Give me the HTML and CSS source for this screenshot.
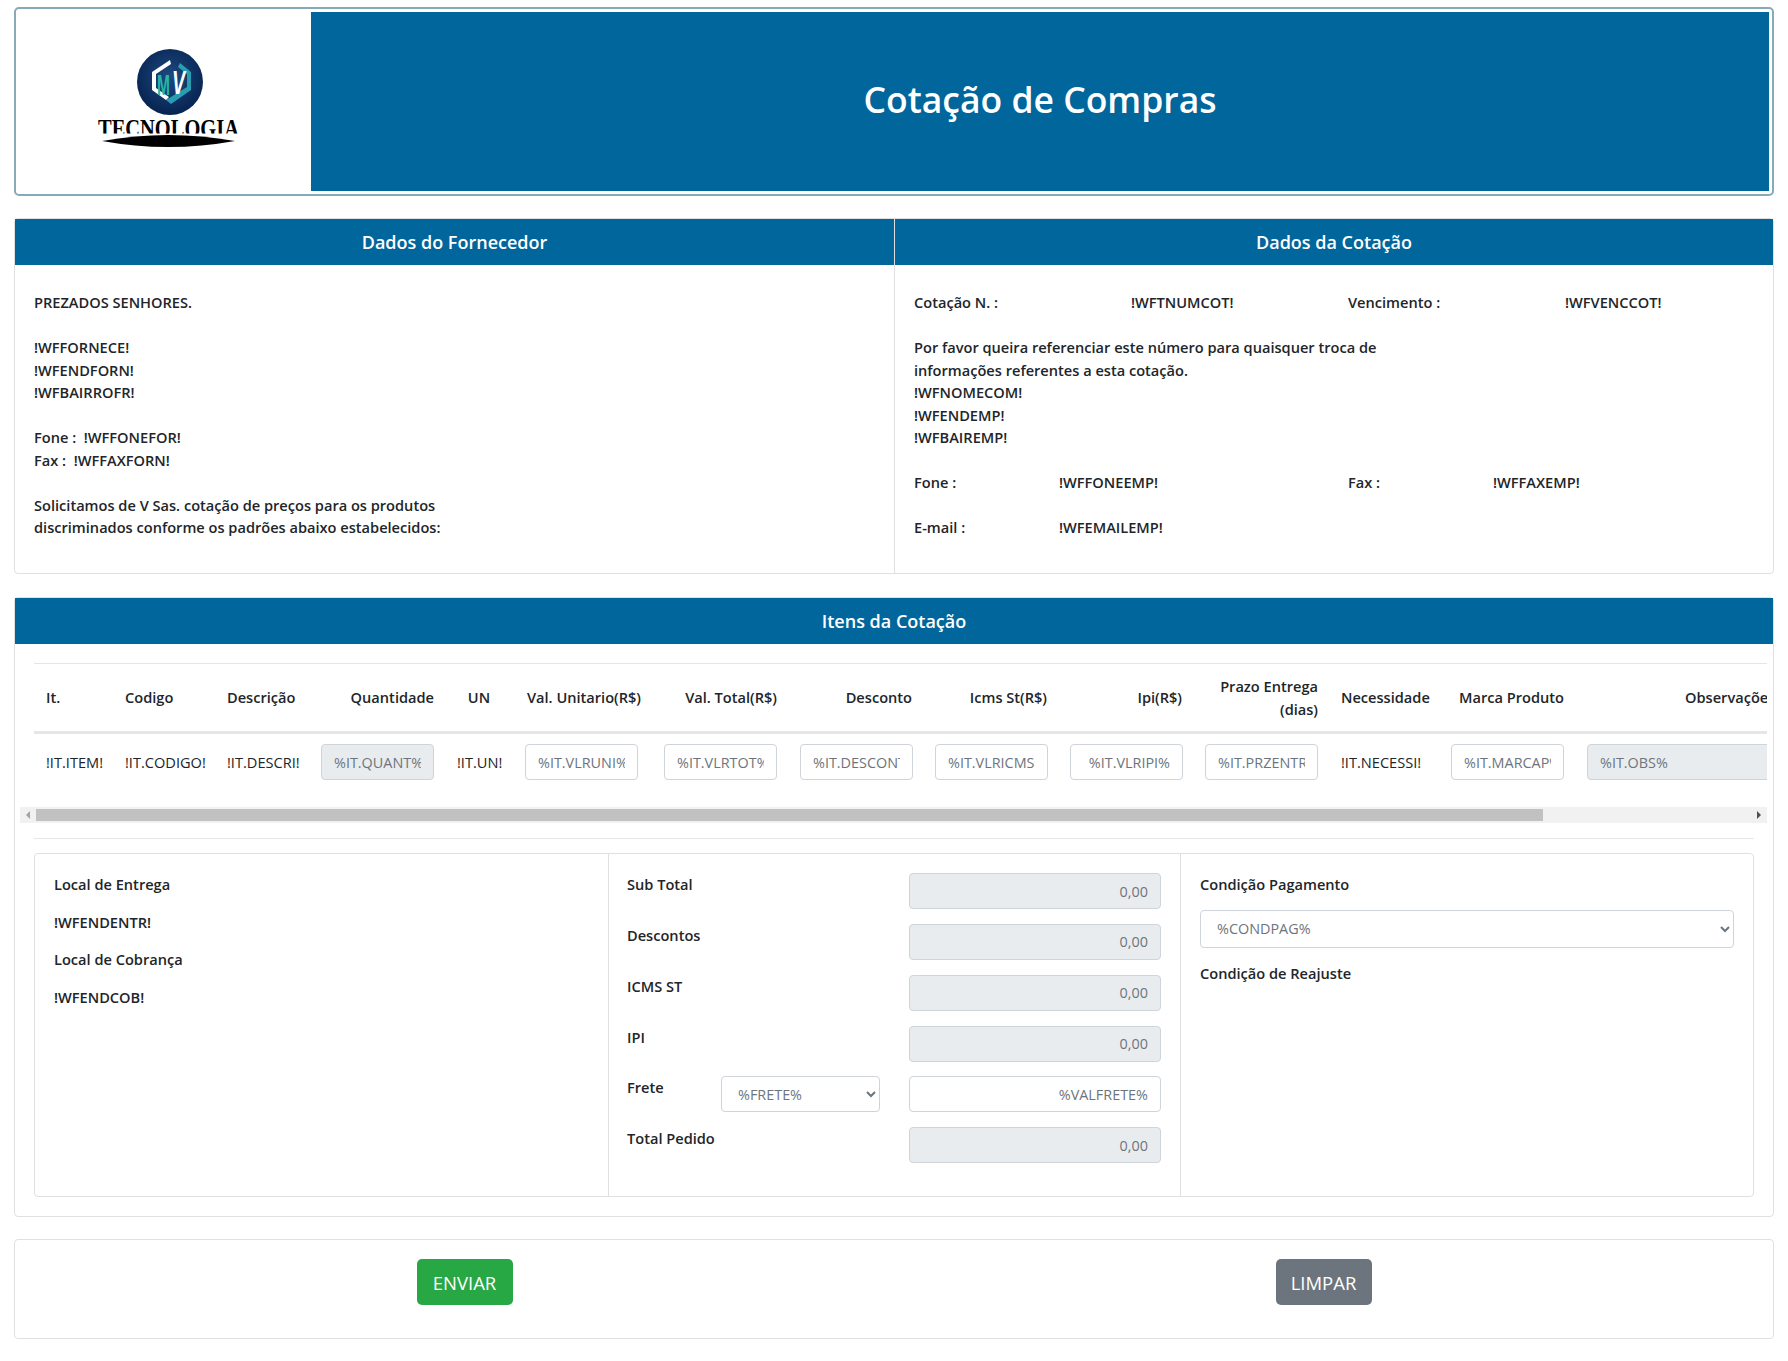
FILE: index.html
```html
<!DOCTYPE html>
<html lang="pt-BR">
<head>
  <meta charset="UTF-8" />
  <title>Cotação de Compras</title>
  <link rel="stylesheet" href="styles.css">
</head>
<body>
  <header class="top">
    <div class="logo">
      <svg width="160" height="110" viewBox="0 0 160 110">
        <defs>
          <radialGradient id="disc" cx="50%" cy="42%" r="60%">
            <stop offset="0" stop-color="#1d4a80" />
            <stop offset="1" stop-color="#06214f" />
          </radialGradient>
          <clipPath id="wordClip"><rect x="0" y="68" width="160" height="16.5" /></clipPath>
        </defs>
        <circle cx="80" cy="33" r="33" fill="url(#disc)" />
        <path d="M80 11 L62 23 V41 L76 51 L79 48 L66 39 V25 L81 15 Z" fill="#fff" />
        <path d="M90 14 L101 23 V41 L81 55 L76 51 L97 38 V25 L88 18 Z" fill="#2a9db0" />
        <text class="logo-m" x="67" y="46" textLength="13" lengthAdjust="spacingAndGlyphs">M</text>
        <text class="logo-v" x="82" y="45" textLength="13" lengthAdjust="spacingAndGlyphs">V</text>
        <g clip-path="url(#wordClip)">
          <text class="logo-word" x="8" y="87.5" textLength="141" lengthAdjust="spacingAndGlyphs">TECNOLOGIA</text>
        </g>
        <path d="M12 92 Q78 80 145 92 Q78 104 12 92 Z" fill="#000" />
      </svg>
    </div>
    <div class="banner"><h1>Cotação de Compras</h1></div>
  </header>

  <section class="card">
    <div class="two-heads">
      <h2 class="card-head">Dados do Fornecedor</h2>
      <h2 class="card-head head-split">Dados da Cotação</h2>
    </div>
    <div class="two-cols">
      <div class="col-body">
        <p>PREZADOS SENHORES.</p>
        <p>!WFFORNECE!<br>!WFENDFORN!<br>!WFBAIRROFR!</p>
        <p>Fone :&nbsp; !WFFONEFOR!<br>Fax :&nbsp; !WFFAXFORN!</p>
        <p>Solicitamos de V Sas. cotação de preços para os produtos<br>discriminados conforme os padrões abaixo estabelecidos:</p>
      </div>
      <div class="col-body col-split">
        <p class="quad"><span>Cotação N. :</span><span>!WFTNUMCOT!</span><span>Vencimento :</span><span>!WFVENCCOT!</span></p>
        <p>Por favor queira referenciar este número para quaisquer troca de<br>informações referentes a esta cotação.<br>!WFNOMECOM!<br>!WFENDEMP!<br>!WFBAIREMP!</p>
        <p class="pair"><span>Fone :</span><span>!WFFONEEMP!</span><span>Fax :</span><span>!WFFAXEMP!</span></p>
        <p class="pair"><span>E-mail :</span><span>!WFEMAILEMP!</span></p>
      </div>
    </div>
  </section>

  <section class="card items-card">
    <h2 class="card-head">Itens da Cotação</h2>
    <div class="items-body">
      <div class="table-wrap">
        <table class="items">
          <colgroup>
            <col class="w79"><col class="w102"><col class="w94"><col class="w136"><col class="w68"><col class="w139">
            <col class="w136"><col class="w135"><col class="w135"><col class="w135"><col class="w136"><col class="w110">
            <col class="w136"><col class="w434">
          </colgroup>
          <thead>
            <tr>
              <th>It.</th><th>Codigo</th><th>Descrição</th><th class="right">Quantidade</th><th class="mid">UN</th>
              <th class="right">Val. Unitario(R$)</th><th class="right">Val. Total(R$)</th><th class="right">Desconto</th>
              <th class="right">Icms St(R$)</th><th class="right">Ipi(R$)</th><th class="right">Prazo Entrega (dias)</th>
              <th>Necessidade</th><th class="right">Marca Produto</th><th class="obs-head">Observações</th>
            </tr>
          </thead>
          <tbody>
            <tr>
              <td>!IT.ITEM!</td><td>!IT.CODIGO!</td><td>!IT.DESCRI!</td>
              <td><input class="field locked" value="%IT.QUANT%" readonly></td>
              <td>!IT.UN!</td>
              <td><input class="field" value="%IT.VLRUNI%"></td>
              <td><input class="field" value="%IT.VLRTOT%"></td>
              <td><input class="field" value="%IT.DESCONTO%"></td>
              <td><input class="field" value="%IT.VLRICMS%"></td>
              <td><input class="field to-right" value="%IT.VLRIPI%"></td>
              <td><input class="field" value="%IT.PRZENTR%"></td>
              <td>!IT.NECESSI!</td>
              <td><input class="field" value="%IT.MARCAP%"></td>
              <td><input class="field locked obs-field" value="%IT.OBS%" readonly></td>
            </tr>
          </tbody>
        </table>
      </div>
      <div class="scrollbar">
        <span class="arrow arrow-left"></span>
        <div class="scroll-track"><div class="scroll-thumb"></div></div>
        <span class="arrow arrow-right"></span>
      </div>
      <hr class="rule">
      <div class="totals">
        <div class="pane delivery">
          <p>Local de Entrega</p>
          <p>!WFENDENTR!</p>
          <p>Local de Cobrança</p>
          <p>!WFENDCOB!</p>
        </div>
        <div class="pane pane-mid">
          <div class="form-row"><label>Sub Total</label><input class="field to-right locked slot" value="0,00" readonly></div>
          <div class="form-row"><label>Descontos</label><input class="field to-right locked slot" value="0,00" readonly></div>
          <div class="form-row"><label>ICMS ST</label><input class="field to-right locked slot" value="0,00" readonly></div>
          <div class="form-row"><label>IPI</label><input class="field to-right locked slot" value="0,00" readonly></div>
          <div class="form-row"><label>Frete</label>
            <select class="field picker"><option>%FRETE%</option></select>
            <input class="field to-right slot" value="%VALFRETE%">
          </div>
          <div class="form-row"><label>Total Pedido</label><input class="field to-right locked slot" value="0,00" readonly></div>
        </div>
        <div class="pane">
          <label class="block-label">Condição Pagamento</label>
          <select class="field picker wide"><option>%CONDPAG%</option></select>
          <label class="block-label">Condição de Reajuste</label>
        </div>
      </div>
    </div>
  </section>

  <section class="card actions">
    <button class="btn btn-send">ENVIAR</button>
    <button class="btn btn-clear">LIMPAR</button>
  </section>
</body>
</html>
```

FILE: styles.css
```css
* {
  box-sizing: border-box;
}
body {
  font-family: "Open Sans", "Noto Sans", sans-serif;
  font-size: 14.6px;
  line-height: 22.5px;
  font-weight: 600;
  color: #212529;
  background-color: #fff;
  margin: 0;
  padding: 7px 14px 0;
}
p {
  margin: 0 0 22.5px;
}
.top {
  display: flex;
  height: 189px;
  border: 2px solid #86aab9;
  border-radius: 5px;
  padding: 3px;
  margin-bottom: 22px;
}
.logo {
  width: 292px;
  display: flex;
  justify-content: center;
  padding: 37px 0 0 10px;
}
.logo-m {
  font: 700 30px "Liberation Sans", sans-serif;
  fill: #22b8a5;
}
.logo-v {
  font: italic 700 34px "Liberation Sans", sans-serif;
  fill: #fff;
}
.logo-word {
  font: 700 25px "Liberation Serif", serif;
  fill: #000;
}
.banner {
  flex: 1;
  background-color: #01669b;
  display: flex;
  align-items: center;
  justify-content: center;
  padding-bottom: 6px;
}
h1 {
  margin: 0;
  color: #fff;
  font-size: 35.5px;
  line-height: 40px;
  font-weight: 600;
}
.card {
  border: 1px solid #e0e0e0;
  border-radius: 4px;
  margin-bottom: 23px;
}
.items-card {
  margin-bottom: 22px;
}
.card-head {
  margin: 0;
  height: 46px;
  line-height: 46px;
  background-color: #01669b;
  color: #fff;
  text-align: center;
  font-size: 18px;
  font-weight: 600;
}
.two-heads, .two-cols {
  display: grid;
  grid-template-columns: 1fr 1fr;
}
.head-split {
  border-left: 1px solid #e0e0e0;
}
.col-body {
  padding: 26px 19px 7px;
  height: 308px;
}
.col-split {
  border-left: 1px solid #e0e0e0;
}
.quad {
  display: grid;
  grid-template-columns: 217px 217px 217px 1fr;
}
.pair {
  display: grid;
  grid-template-columns: 145px 289px 145px 1fr;
}
.items-body {
  padding: 19px;
}
.table-wrap {
  margin: 0 -13px 0 -14px;
  padding: 0 0 0 14px;
  overflow: hidden;
}
.items {
  border-collapse: collapse;
  table-layout: fixed;
  width: 1975px;
}
.w68 { width: 68px; }
.w79 { width: 79px; }
.w94 { width: 94px; }
.w102 { width: 102px; }
.w110 { width: 110px; }
.w135 { width: 135px; }
.w136 { width: 136px; }
.w139 { width: 139px; }
.w434 { width: 434px; }
.items th, .items td {
  padding: 11px 12px;
  text-align: left;
  vertical-align: middle;
}
.items th {
  border-top: 1px solid #e4e6e8;
  border-bottom: 3px solid #e4e6e8;
  font-weight: 600;
}
.items td {
  font-weight: 400;
  white-space: nowrap;
  overflow: hidden;
  padding-top: 10px;
  padding-bottom: 13px;
}
.items th.right {
  text-align: right;
  padding-right: 11px;
}
.items th.mid {
  text-align: center;
}
.items th.obs-head {
  padding-left: 110px;
}
.field {
  display: block;
  width: 100%;
  height: 36px;
  padding: 0 12px;
  border: 1px solid #ced4da;
  border-radius: 4px;
  background-color: #fff;
  color: #6c757d;
  font: 400 14.4px "Open Sans", "Noto Sans", sans-serif;
}
.items .field {
  width: 113px;
}
.items .obs-field {
  width: 100%;
}
.locked {
  background-color: #e9ecef;
}
.to-right {
  text-align: right;
}
.scrollbar {
  display: flex;
  height: 16px;
  margin: 14px -13px 0 -14px;
  background-color: #f1f1f1;
}
.arrow {
  width: 16px;
  display: flex;
  align-items: center;
  justify-content: center;
}
.arrow::before {
  content: "";
  border-top: 4px solid transparent;
  border-bottom: 4px solid transparent;
}
.arrow-left::before {
  border-right: 4px solid #a3a3a3;
}
.arrow-right::before {
  border-left: 4px solid #505050;
}
.scroll-track {
  flex: 1;
  padding: 2px 0;
}
.scroll-thumb {
  height: 12px;
  width: 87.9%;
  background-color: #c1c1c1;
}
.rule {
  border: 0;
  border-top: 1px solid #e4e6e8;
  margin: 15px 0 14px;
}
.totals {
  display: grid;
  grid-template-columns: 573px 573px 1fr;
  height: 344px;
  border: 1px solid #e0e0e0;
  border-radius: 4px;
}
.pane {
  padding: 19px;
}
.pane-mid {
  border-left: 1px solid #e0e0e0;
  border-right: 1px solid #e0e0e0;
  padding-left: 18px;
}
.delivery p {
  margin-bottom: 15px;
}
.form-row {
  display: grid;
  grid-template-columns: 94px 159px 1fr 252px;
  margin-bottom: 14.85px;
}
.form-row .slot {
  grid-column: 4;
}
.picker {
  padding-left: 12px;
}
.wide {
  height: 38px;
  margin: 14px 0;
}
.block-label {
  display: block;
}
.actions {
  display: grid;
  grid-template-columns: 1fr 1fr;
  height: 100px;
  padding: 19px 0;
  margin-bottom: 0;
}
.btn {
  justify-self: center;
  width: 96px;
  height: 46px;
  border: 0;
  border-radius: 5px;
  color: #fff;
  font: 400 18.5px "Open Sans", "Noto Sans", sans-serif;
}
.btn-send {
  background-color: #28a745;
  margin-left: 20px;
}
.btn-clear {
  background-color: #6c757d;
  margin-right: 20px;
}
```
